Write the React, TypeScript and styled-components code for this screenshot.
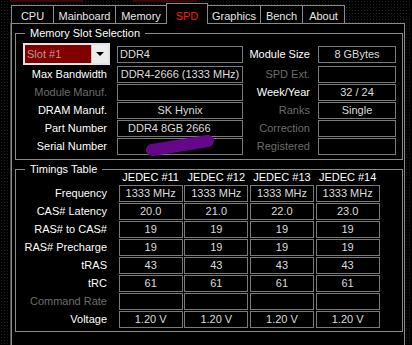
import React from 'react'
import styled, { createGlobalStyle } from 'styled-components'

const GlobalStyle = createGlobalStyle`
    html, body {
        margin:0;
        padding:0;
    }
    body {
        width:412px;
        height:345px;
        overflow:hidden;
        background-color:#000;
        background-image:radial-gradient(circle, #222 0.7px, transparent 1px);
        background-size:3px 3px;
        font-family:"Liberation Sans", Arial, sans-serif;
        font-size:11px;
    }
`

const Window = styled.div`
    position:relative;
    width:412px;
    height:345px;
    box-sizing:border-box;
    padding:3px 0 0 11px;
    background:
        linear-gradient(#3d0707, #3d0707) 10px 0 / 73px 2px no-repeat,
        linear-gradient(#3d0707, #3d0707) 132px 0 / 65px 2px no-repeat;
`

const TabBar = styled.div`
    display:flex;
    align-items:flex-end;
    height:20px;
`

const Tab = styled.div<{ $active?: boolean; $w: number }>`
    position:relative;
    z-index:${p => p.$active ? 2 : 1};
    width:${p => p.$w}px;
    height:${p => p.$active ? 21 : 18}px;
    margin-bottom:${p => p.$active ? -1 : 0}px;
    box-sizing:border-box;
    border:1px solid #8a8a8a;
    border-bottom:none;
    background:#000;
    display:flex;
    align-items:center;
    justify-content:center;
    padding-top:${p => p.$active ? 3 : 2}px;
    color:${p => p.$active ? '#ff1a1a' : '#e8e8e8'};
    white-space:nowrap;
    & + & {
        margin-left:-1px;
    }
`

const Panel = styled.div`
    width:394px;
    height:330px;
    box-sizing:border-box;
    border:1px solid #8a8a8a;
    box-shadow:-1px 0 0 #4a4a4a;
    background:#000;
    padding:0 1px 0 3px;
`

const Group = styled.fieldset<{ $top: number }>`
    margin:${p => p.$top}px 0 0 0;
    padding:0;
    min-width:0;
    border:1px solid #8a8a8a;
`

const Legend = styled.legend`
    margin-left:9px;
    padding:0 5px;
    line-height:14px;
    color:#fff;
`

const SlotGrid = styled.div`
    display:grid;
    grid-template-columns:101px 126px 75px 78px;
    grid-template-rows:22px repeat(5, 17px);
    row-gap:1px;
    align-items:center;
    padding:3px 0 4px 0;
`

const TimingGrid = styled.div`
    display:grid;
    grid-template-columns:101px repeat(4, 64px);
    grid-template-rows:14px repeat(8, 17px);
    column-gap:1.66px;
    row-gap:1px;
    align-items:center;
    margin-top:-6px;
    padding-bottom:3px;
`

const Label = styled.div<{ $dim?: boolean; $pad: number }>`
    text-align:right;
    padding-right:${p => p.$pad}px;
    color:${p => p.$dim ? '#6c6c6c' : '#fff'};
    line-height:15px;
    white-space:nowrap;
`

const Field = styled.div<{ $left?: boolean; $raise?: number }>`
    height:17px;
    box-sizing:border-box;
    border:1px solid #7a7a7a;
    background:#000;
    color:#dcdcdc;
    line-height:15px;
    padding:0 2px;
    text-align:${p => p.$left ? 'left' : 'center'};
    white-space:pre;
    overflow:hidden;
    align-self:${p => p.$raise ? 'end' : 'center'};
    margin-bottom:${p => p.$raise || 0}px;
`

const ColHead = styled.div`
    text-align:center;
    color:#fff;
    line-height:14px;
    white-space:nowrap;
`

const Select = styled.div`
    margin-left:7px;
    width:87px;
    height:22px;
    box-sizing:border-box;
    border:2px solid #e4e4e4;
    display:flex;
`

const SelectValue = styled.div`
    flex:1;
    background:#800000;
    color:#b89a9a;
    line-height:18px;
    padding-left:2px;
`

const SelectButton = styled.div`
    width:16px;
    background:#ececec;
    border-left:1px solid #c8c8c8;
    display:flex;
    align-items:center;
    justify-content:center;
`

const Arrow = styled.div`
    width:0;
    height:0;
    border-left:4px solid transparent;
    border-right:4px solid transparent;
    border-top:4px solid #000;
`

const Scribble = styled.svg`
    position:absolute;
    left:140px;
    top:132px;
`

const tabs = [
    { name: 'CPU', w: 43 },
    { name: 'Mainboard', w: 63 },
    { name: 'Memory', w: 52 },
    { name: 'SPD', w: 42, active: true },
    { name: 'Graphics', w: 54 },
    { name: 'Bench', w: 43 },
    { name: 'About', w: 43 },
]

const slotRows = [
    { label: 'Max Bandwidth', value: 'DDR4-2666 (1333 MHz)', rLabel: 'SPD Ext.', rDim: true, rValue: '' },
    { label: 'Module Manuf.', dim: true, value: '', rLabel: 'Week/Year', rValue: '32 / 24' },
    { label: 'DRAM Manuf.', value: 'SK Hynix', rLabel: 'Ranks', rDim: true, rValue: 'Single' },
    { label: 'Part Number', value: 'DDR4 8GB 2666       ', rLabel: 'Correction', rDim: true, rValue: '' },
    { label: 'Serial Number', value: '', rLabel: 'Registered', rDim: true, rValue: '' },
]

const timings = [
    { label: 'Frequency', values: ['1333 MHz', '1333 MHz', '1333 MHz', '1333 MHz'] },
    { label: 'CAS# Latency', values: ['20.0', '21.0', '22.0', '23.0'] },
    { label: 'RAS# to CAS#', values: ['19', '19', '19', '19'] },
    { label: 'RAS# Precharge', values: ['19', '19', '19', '19'] },
    { label: 'tRAS', values: ['43', '43', '43', '43'] },
    { label: 'tRC', values: ['61', '61', '61', '61'] },
    { label: 'Command Rate', dim: true, values: ['', '', '', ''] },
    { label: 'Voltage', values: ['1.20 V', '1.20 V', '1.20 V', '1.20 V'] },
]

const App: React.FC = () => {
    return <Window>
        <GlobalStyle />
        <TabBar>
            {tabs.map(t => <Tab key={t.name} $w={t.w} $active={t.active}>{t.name}</Tab>)}
        </TabBar>
        <Panel>
            <Group $top={2}>
                <Legend>Memory Slot Selection</Legend>
                <SlotGrid>
                    <Select>
                        <SelectValue>Slot #1</SelectValue>
                        <SelectButton><Arrow /></SelectButton>
                    </Select>
                    <Field $left $raise={2}>DDR4</Field>
                    <Label $pad={8}>Module Size</Label>
                    <Field $raise={2}>8 GBytes</Field>
                    {slotRows.map(r => <React.Fragment key={r.label}>
                        <Label $pad={10} $dim={r.dim}>{r.label}</Label>
                        <Field>{r.value}</Field>
                        <Label $pad={8} $dim={r.rDim}>{r.rLabel}</Label>
                        <Field>{r.rValue}</Field>
                    </React.Fragment>)}
                </SlotGrid>
            </Group>
            <Group $top={2}>
                <Legend>Timings Table</Legend>
                <TimingGrid>
                    <div />
                    {['JEDEC #11', 'JEDEC #12', 'JEDEC #13', 'JEDEC #14'].map(h => <ColHead key={h}>{h}</ColHead>)}
                    {timings.map(r => <React.Fragment key={r.label}>
                        <Label $pad={10} $dim={r.dim}>{r.label}</Label>
                        {r.values.map((v, i) => <Field key={i}>{v}</Field>)}
                    </React.Fragment>)}
                </TimingGrid>
            </Group>
        </Panel>
        <Scribble width="80" height="28" viewBox="0 0 80 28">
            <line x1="12" y1="18" x2="68" y2="9" stroke="#66078a" strokeWidth="12" strokeLinecap="round" />
        </Scribble>
    </Window>
}

export default App
